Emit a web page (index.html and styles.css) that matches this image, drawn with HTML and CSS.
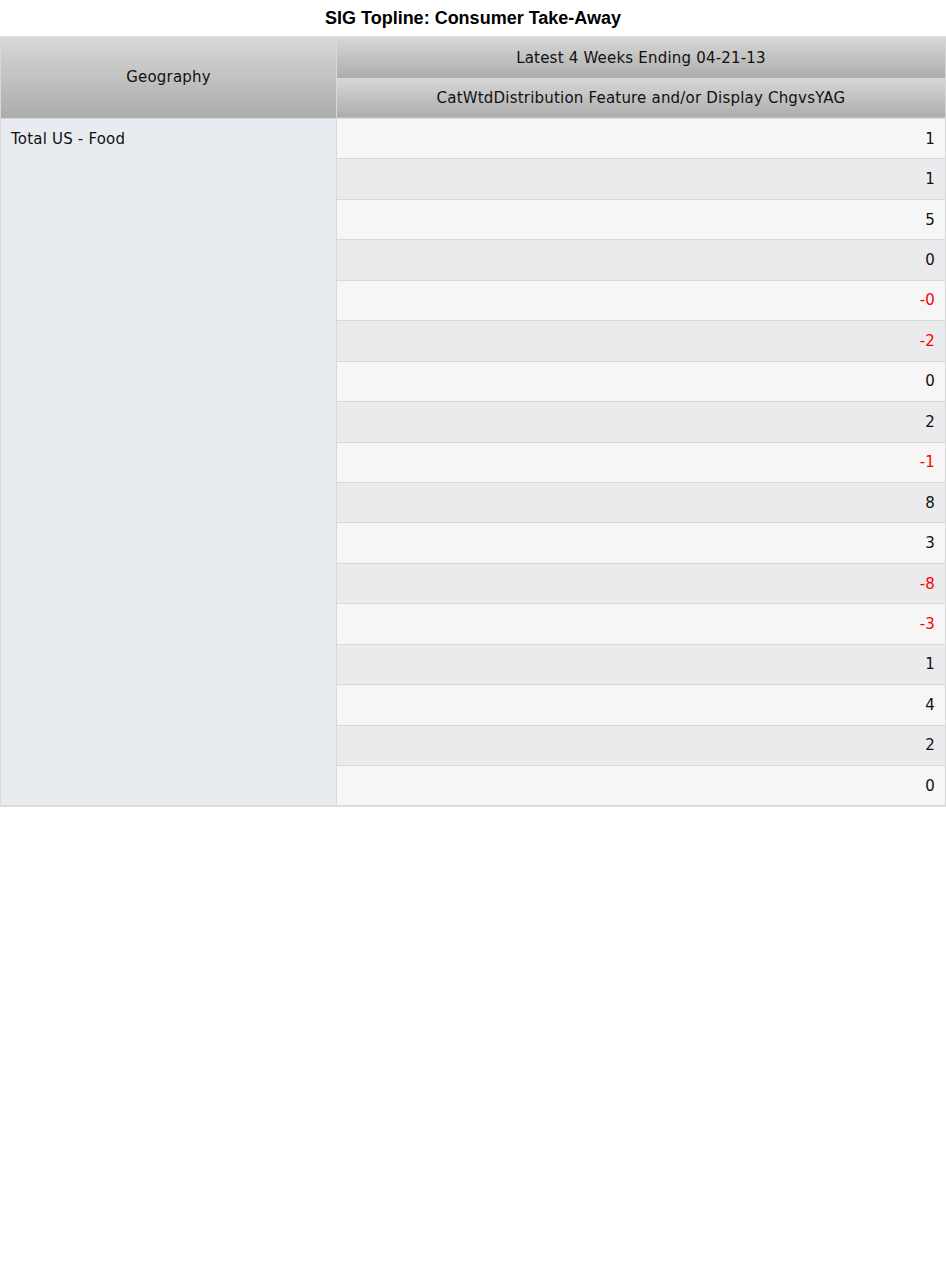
FILE: index.html
```html
<!DOCTYPE html>
<html lang="en">
<head>
    <meta charset="UTF-8">
    <title>SIG Topline: Consumer Take-Away</title>
    <link rel="stylesheet" href="styles.css">
</head>
<body>
    <div class="report">
        <h1 class="report-title">SIG Topline: Consumer Take-Away</h1>

        <table class="grid">
            <thead>
                <tr>
                    <th class="geo-head" rowspan="2">Geography</th>
                    <th>Latest 4 Weeks Ending 04-21-13</th>
                </tr>
                <tr>
                    <th>CatWtdDistribution Feature and/or Display ChgvsYAG</th>
                </tr>
            </thead>
            <tbody>
                <tr class="odd"><td class="geo" rowspan="17">Total US - Food</td><td class="num">1</td></tr>
                <tr class="even"><td class="num">1</td></tr>
                <tr class="odd"><td class="num">5</td></tr>
                <tr class="even"><td class="num">0</td></tr>
                <tr class="odd"><td class="num neg">-0</td></tr>
                <tr class="even"><td class="num neg">-2</td></tr>
                <tr class="odd"><td class="num">0</td></tr>
                <tr class="even"><td class="num">2</td></tr>
                <tr class="odd"><td class="num neg">-1</td></tr>
                <tr class="even"><td class="num">8</td></tr>
                <tr class="odd"><td class="num">3</td></tr>
                <tr class="even"><td class="num neg">-8</td></tr>
                <tr class="odd"><td class="num neg">-3</td></tr>
                <tr class="even"><td class="num">1</td></tr>
                <tr class="odd"><td class="num">4</td></tr>
                <tr class="even"><td class="num">2</td></tr>
                <tr class="odd"><td class="num">0</td></tr>
            </tbody>
        </table>
    </div>
</body>
</html>
```

FILE: styles.css
```css
body {
    margin: 0;
    background: #fff;
    color: #000;
    font-family: "DejaVu Sans", Verdana, sans-serif;
}

.report-title {
    margin: 0;
    height: 36px;
    line-height: 36px;
    text-align: center;
    font-family: "Liberation Sans", Arial, sans-serif;
    font-size: 18px;
    font-weight: bold;
}

.grid {
    width: 946px;
    border-collapse: collapse;
    border-top: 2px solid #dcdcdc;
    border-bottom: 2px solid #dcdcdc;
    font-size: 15px;
    letter-spacing: 0.2px;
    color: #111;
    table-layout: fixed;
}

.grid th,
.grid td {
    border: 1px solid #d8d8d8;
    padding: 0 10px;
}

.grid th {
    height: 39.5px;
    font-weight: normal;
    text-align: center;
    background: linear-gradient(to bottom, #d7d7d7, #acacac);
}

.grid .geo-head {
    width: 315px;
    padding-bottom: 2px;
}

.grid td {
    height: 39.45px;
}

.grid .geo {
    vertical-align: top;
    padding-top: 11px;
    background: #e8ebf0;
}

.num {
    text-align: right;
    padding-top: 2px;
}

.odd .num {
    background: #f6f6f6;
}

.even .num {
    background: #ebebed;
}

.neg {
    color: #ff0000;
}
```
